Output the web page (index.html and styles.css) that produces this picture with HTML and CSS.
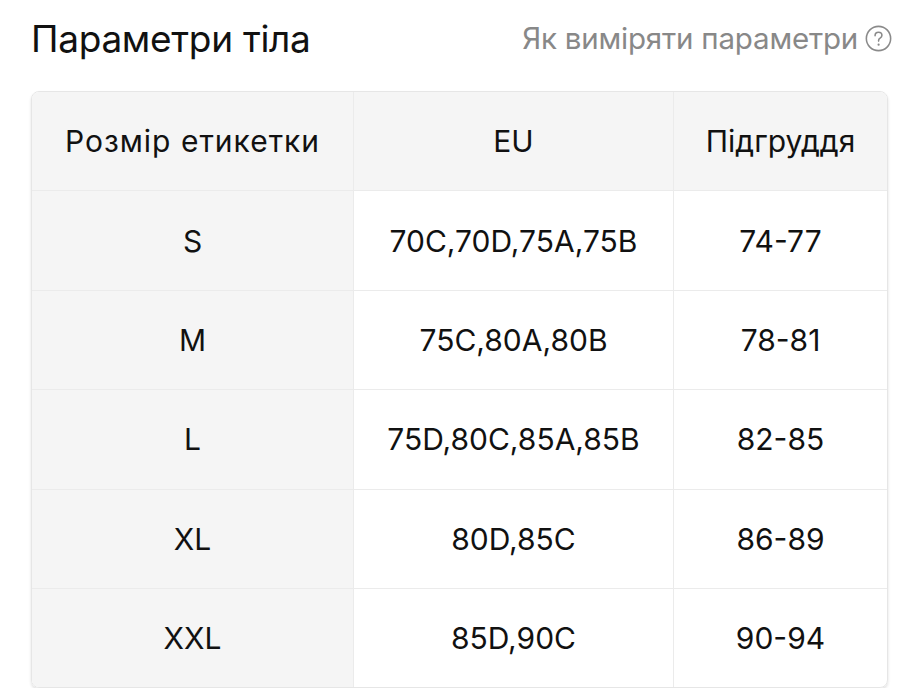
FILE: index.html
```html
<!DOCTYPE html>
<html lang="uk">
<head>
<meta charset="utf-8">
<link rel="stylesheet" href="styles.css">
</head>
<body>
<div class="page">
  <div class="top">
    <h1 class="title">Параметри тіла</h1>
    <a class="howto">Як виміряти параметри
      <svg class="q" viewBox="0 0 26 26" width="27" height="27"><circle cx="13" cy="13" r="11.7" fill="none" stroke="#8a8a8a" stroke-width="1.5"/><path d="M9.7 10.3c0-2 1.5-3.3 3.3-3.3 1.9 0 3.3 1.2 3.3 2.9 0 1.4-.8 2.1-1.8 2.8-.9.6-1.4 1.1-1.4 2.3v.5" fill="none" stroke="#8a8a8a" stroke-width="1.5" stroke-linecap="round"/><circle cx="13.1" cy="18.9" r="1.05" fill="#8a8a8a"/></svg>
    </a>
  </div>
  <div class="card">
    <table class="sizes">
      <thead>
        <tr><th class="c1 wide">Розмір етикетки</th><th class="c2">EU</th><th class="c3">Підгруддя</th></tr>
      </thead>
      <tbody>
        <tr><td class="c1">S</td><td>70C,70D,75A,75B</td><td>74-77</td></tr>
        <tr><td class="c1">M</td><td>75C,80A,80B</td><td>78-81</td></tr>
        <tr><td class="c1">L</td><td>75D,80C,85A,85B</td><td>82-85</td></tr>
        <tr><td class="c1">XL</td><td>80D,85C</td><td>86-89</td></tr>
        <tr><td class="c1">XXL</td><td>85D,90C</td><td>90-94</td></tr>
      </tbody>
    </table>
  </div>
</div>
</body>
</html>
```
FILE: styles.css
```css
html, body { margin: 0; padding: 0; background: #fff; }
body { font-family: Inter, "Noto Sans", sans-serif; color: #111; }
.page { padding: 14px 32px 0 31px; }
.top { display: flex; justify-content: space-between; align-items: center; height: 48px; margin-bottom: 29px; }
.title { margin: 0; font-size: 37px; font-weight: 400; letter-spacing: -0.3px; color: #111; }
.howto { display: flex; align-items: center; gap: 7px; font-size: 29.5px; color: #888; letter-spacing: -0.2px; }
.q { display: block; }
.card { border: 1px solid #e6e6e6; border-radius: 8px; overflow: hidden; box-shadow: 0 2px 3px rgba(0,0,0,0.12); width: 855px; }
.sizes { width: 100%; border-collapse: collapse; table-layout: fixed; font-size: 30px; }
.sizes th, .sizes td { height: 98.4px; padding: 0; text-align: center; font-weight: 400; border-right: 1px solid #ebebeb; border-bottom: 1px solid #ebebeb; }
.sizes th:last-child, .sizes td:last-child { border-right: none; }
.sizes tbody tr:last-child td { border-bottom: none; }
.sizes thead th { background: #f5f5f5; }
.sizes td.c1 { background: #f5f5f5; }
.sizes .c1 { width: 321px; }
.sizes .c2 { width: 319px; }
.sizes .wide { letter-spacing: 1px; }
```
